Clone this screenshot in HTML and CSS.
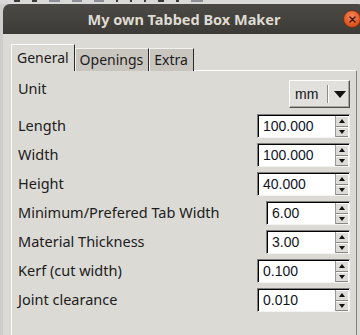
FILE: index.html
```html
<!DOCTYPE html>
<html lang="en">
<head>
    <meta charset="UTF-8">
    <meta name="viewport" content="width=device-width, initial-scale=1.0">
    <title>My own Tabbed Box Maker</title>
    <link rel="stylesheet" href="styles.css">
</head>
<body>
    <div class="screen">
        <div class="desk-bar">
            <span class="mark dark" style="width: 6px"></span>
            <span class="mark dark" style="width: 5px"></span>
            <span class="mark" style="width: 11px"></span>
            <span class="mark" style="width: 10px"></span>
            <span class="mark" style="width: 10px"></span>
            <span class="mark dark" style="width: 2px"></span>
            <span class="mark dark" style="width: 2px"></span>
            <span class="mark dark" style="width: 2px"></span>
            <span class="mark dark" style="width: 6px"></span>
            <span class="mark dark" style="width: 3px"></span>
            <span class="mark" style="width: 12px"></span>
        </div>

        <div class="window">
            <div class="titlebar">
                <span></span>
                <span class="title">My own Tabbed Box Maker</span>
                <span class="close">
                    <svg width="9" height="9" viewBox="0 0 9 9">
                        <path d="M2 2 L7 7 M7 2 L2 7" stroke="#3a1405" stroke-width="1.4" stroke-linecap="round"/>
                    </svg>
                </span>
            </div>

            <div class="client">
                <div class="tabs">
                    <div class="tab active">General</div>
                    <div class="tab">Openings</div>
                    <div class="tab">Extra</div>
                </div>

                <div class="panel">
                    <div class="row unit-row">
                        <span class="label">Unit</span>
                        <div class="combo">
                            <span class="combo-text">mm</span>
                            <span class="combo-sep"></span>
                            <span class="combo-arrow"></span>
                        </div>
                    </div>

                    <div class="row">
                        <span class="label">Length</span>
                        <div class="spin wide">
                            <span class="value">100.000</span>
                            <span class="arrows"><i class="up"></i><i class="down"></i></span>
                        </div>
                    </div>
                    <div class="row">
                        <span class="label">Width</span>
                        <div class="spin wide">
                            <span class="value">100.000</span>
                            <span class="arrows"><i class="up"></i><i class="down"></i></span>
                        </div>
                    </div>
                    <div class="row">
                        <span class="label">Height</span>
                        <div class="spin wide">
                            <span class="value">40.000</span>
                            <span class="arrows"><i class="up"></i><i class="down"></i></span>
                        </div>
                    </div>
                    <div class="row">
                        <span class="label">Minimum/Prefered Tab Width</span>
                        <div class="spin narrow">
                            <span class="value">6.00</span>
                            <span class="arrows"><i class="up"></i><i class="down"></i></span>
                        </div>
                    </div>
                    <div class="row">
                        <span class="label">Material Thickness</span>
                        <div class="spin narrow">
                            <span class="value">3.00</span>
                            <span class="arrows"><i class="up"></i><i class="down"></i></span>
                        </div>
                    </div>
                    <div class="row">
                        <span class="label">Kerf (cut width)</span>
                        <div class="spin wide">
                            <span class="value">0.100</span>
                            <span class="arrows"><i class="up"></i><i class="down"></i></span>
                        </div>
                    </div>
                    <div class="row">
                        <span class="label">Joint clearance</span>
                        <div class="spin wide">
                            <span class="value">0.010</span>
                            <span class="arrows"><i class="up"></i><i class="down"></i></span>
                        </div>
                    </div>
                </div>
            </div>
        </div>
    </div>
</body>
</html>
```

FILE: styles.css
```css
body {
    margin: 0;
    background-color: #d4d4d2;
}
.screen {
    width: 360px;
    height: 335px;
    overflow: hidden;
    background-color: #cdcdcb;
}
.desk-bar {
    height: 4px;
    display: flex;
    gap: 12px;
    padding-left: 14px;
    background-color: #d9d9d7;
}
.mark {
    height: 2px;
    background-color: #8c8f96;
}
.mark.dark {
    background-color: #3b3b3b;
}
.window {
    margin-left: 3px;
    width: 362px;
}
.titlebar {
    height: 30px;
    display: grid;
    grid-template-columns: 1fr auto 1fr;
    align-items: center;
    background: linear-gradient(#4a4944, #3c3b37);
    border-radius: 7px 7px 0 0;
}
.title {
    font-family: "Noto Sans", sans-serif;
    font-weight: bold;
    font-size: 14.5px;
    color: #dfdbd2;
}
.close {
    justify-self: end;
    margin-right: 4px;
    width: 16px;
    height: 16px;
    border-radius: 50%;
    border: 1px solid #7a2f12;
    background: radial-gradient(circle at 50% 35%, #f58a5a, #e05a24 60%, #c8451a);
    display: flex;
    align-items: center;
    justify-content: center;
}
.client {
    height: 301px;
    padding: 10px 8px 0;
    background-color: #dcdad5;
    box-sizing: border-box;
}
.tabs {
    position: relative;
    z-index: 1;
    display: flex;
    align-items: flex-end;
    height: 27px;
    margin-bottom: -1px;
}
.tab {
    height: 23px;
    padding: 0 5px 0 4px;
    box-sizing: border-box;
    font-family: "Noto Sans", sans-serif;
    font-size: 14px;
    line-height: 21px;
    color: #1c1c1c;
    background-color: #c9c6c0;
    border-top: 1px solid #f2f1ee;
    border-left: 1px solid #f2f1ee;
    border-right: 1px solid #2b2b2b;
}
.tab.active {
    height: 27px;
    padding: 0 5px 0 5px;
    line-height: 26px;
    background-color: #dcdad5;
    border-top-color: #ffffff;
    border-left-color: #ffffff;
}
.panel {
    height: 270px;
    box-sizing: border-box;
    padding: 9px 6px 0 6px;
    border-top: 1px solid #ffffff;
    border-left: 1px solid #ffffff;
    border-right: 1px solid #85837e;
    display: flex;
    flex-direction: column;
    gap: 5px;
}
.row {
    height: 24px;
    display: grid;
    grid-template-columns: 1fr auto;
    align-items: center;
}
.unit-row {
    height: 28px;
    align-items: start;
    margin-bottom: 1px;
}
.label {
    margin-top: -2px;
    font-family: "Noto Sans", sans-serif;
    font-size: 14.5px;
    line-height: 18px;
    color: #202020;
}
.unit-row .label {
    margin-top: -1px;
}
.combo {
    width: 61px;
    height: 28px;
    box-sizing: border-box;
    display: flex;
    align-items: center;
    background-color: #e2e0dc;
    border: 1px solid;
    border-color: #ffffff #505050 #505050 #ffffff;
    box-shadow: inset -1px -1px 0 #a8a6a1;
    font-family: "Liberation Sans", sans-serif;
    font-size: 14px;
    color: #141414;
}
.combo-text {
    margin-left: 5px;
    width: 32px;
}
.combo-sep {
    width: 1px;
    height: 18px;
    background-color: #8d8b86;
    border-right: 1px solid #ffffff;
}
.combo-arrow {
    margin-left: 5px;
    width: 0;
    height: 0;
    border-left: 6px solid transparent;
    border-right: 6px solid transparent;
    border-top: 7px solid #111111;
}
.spin {
    height: 24px;
    box-sizing: border-box;
    display: flex;
    background-color: #ffffff;
    border: 1px solid;
    border-color: #7d7d7d #f4f4f4 #f4f4f4 #7d7d7d;
    box-shadow: inset 1px 1px 0 #000000;
}
.spin.wide {
    width: 93px;
}
.spin.narrow {
    width: 84px;
}
.value {
    flex: 1;
    padding: 2px 0 0 5px;
    font-family: "Liberation Sans", sans-serif;
    font-size: 14px;
    line-height: 19px;
    color: #111522;
}
.arrows {
    width: 12px;
    margin: 1px 1px 0 0;
    display: flex;
    flex-direction: column;
    border-left: 1px solid #9a9994;
}
.arrows i {
    flex: 1;
    display: flex;
    align-items: center;
    justify-content: center;
    background-color: #dedcd8;
    border-top: 1px solid #ffffff;
    border-bottom: 1px solid #8a8883;
}
.arrows i::before {
    content: "";
    width: 0;
    height: 0;
    border-left: 3px solid transparent;
    border-right: 3px solid transparent;
}
.arrows .up::before {
    border-bottom: 4px solid #111111;
}
.arrows .down::before {
    border-top: 4px solid #111111;
}
```
